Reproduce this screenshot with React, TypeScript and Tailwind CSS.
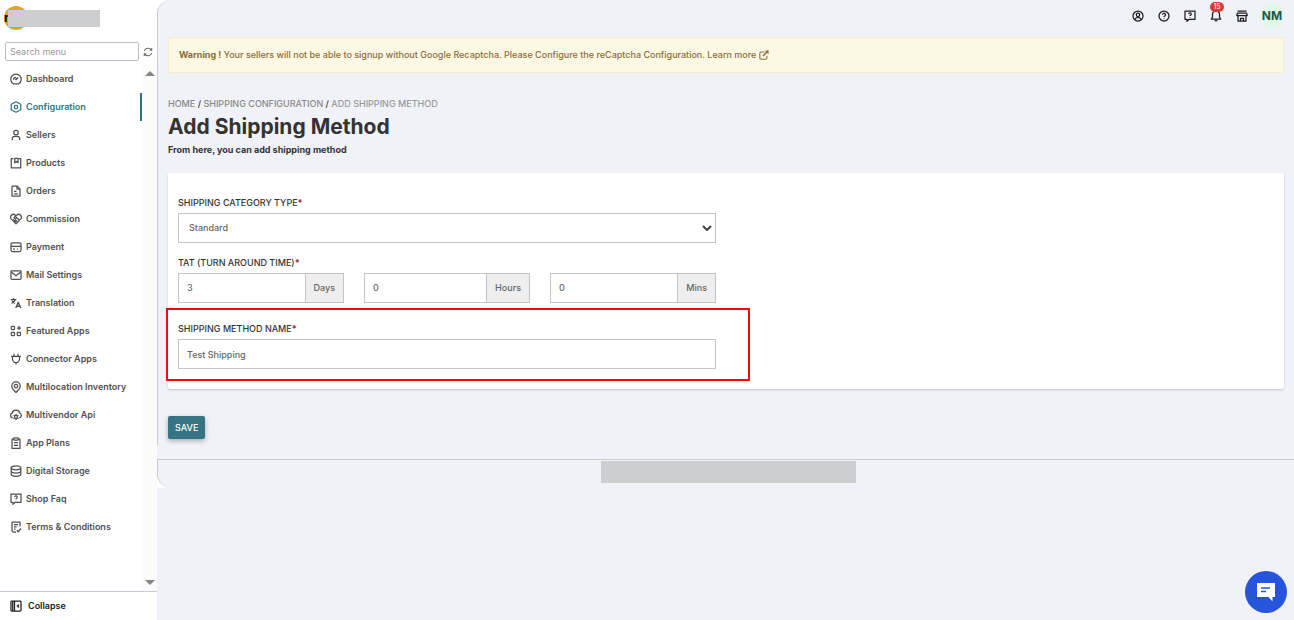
import React from 'react';

const ICONS = {
  dashboard: (
    <>
      <path d="M6.500 21.500a10.500 10.500 0 1 1 11 0Z" />
      <path d="m11 14 5-5" strokeWidth="3.500" />
      <path d="M7 13.500a5 5 0 0 1 5-5" />
    </>
  ),
  configuration: (
    <>
      <path d="M12 1.500 21.500 6.500v11L12 22.500 2.500 17.500v-11Z" />
      <circle cx="12" cy="12" r="3.500" />
    </>
  ),
  sellers: (
    <>
      <circle cx="12" cy="7" r="4.500" />
      <path d="M4.500 22v-2.500a5 5 0 0 1 5-5h5a5 5 0 0 1 5 5V22" />
    </>
  ),
  products: (
    <>
      <path d="M7 3H2.500v18.500h19V3H17" />
      <path d="M9.500 2.500h6.500v9l-3.200-2.500-3.300 2.500Z" />
    </>
  ),
  orders: (
    <>
      <path d="M14 2H4v20h16V8Z" />
      <path d="M14 2v6h6M8 12.500h5M8 17.500h8" />
    </>
  ),
  commission: (
    <>
      <path d="M12 21.500 2.800 12.300a5.800 5.800 0 0 1 0-7.800 5.700 5.700 0 0 1 8 0L12 5.500l1.200-1a5.700 5.700 0 0 1 8 0 5.800 5.800 0 0 1 0 7.800Z" />
      <path d="m12 5.500-4 4c1.500 2 3.500 1.500 5-.5l5.500 5M10 13l5 4.500M6.500 13l5 5" />
    </>
  ),
  payment: (
    <>
      <rect x="2" y="3.500" width="20" height="17.500" rx="3" />
      <path d="M2 10.500h20M6 16h4M14 16h2" />
    </>
  ),
  mail: (
    <>
      <rect x="2" y="3.500" width="20" height="17" rx="1.500" />
      <path d="m2.500 6 9.500 7.500L21.500 6" />
    </>
  ),
  translation: (
    <>
      <path d="M1.500 5h11M7 2v3M3 13c4-1.500 6.500-4 7.500-8M4 7.500c1.500 3 3.500 4.500 6 5.500" />
      <path d="m11.500 22 5-11.500 5 11.500M13 18.500h7" strokeWidth="2.600" />
    </>
  ),
  featured: (
    <>
      <rect x="2.500" y="2.500" width="6.500" height="6.500" rx="1.500" />
      <rect x="2.500" y="14.500" width="6.500" height="6.500" rx="1.500" />
      <rect x="14.500" y="14.500" width="6.500" height="6.500" rx="1.500" />
      <path d="M18 2v8M14 6h8" />
    </>
  ),
  connector: (
    <>
      <path d="M2 6.500h20M5 6.500V12a7 7 0 0 0 14 0V6.500M8 1.500v5M16 1.500v5M12 19v4" />
    </>
  ),
  location: (
    <>
      <path d="M12 23c-5-4.500-8.500-8-8.500-12.800a8.500 8.500 0 0 1 17 0C20.500 15 17 18.500 12 23Z" />
      <circle cx="12" cy="10" r="3.500" />
    </>
  ),
  cloud: (
    <>
      <path d="M5.500 18A5 5 0 0 1 4 8.500a8.200 8.200 0 0 1 15.800 0 5 5 0 0 1-1.300 9.500" />
      <circle cx="12" cy="15.500" r="3" />
      <path d="M12 10v2.500M12 18.500V22M7 12.500l2.500 1.500M17 12.500 14.500 14M7 19.500l2.500-2M17 19.500l-2.500-2" />
    </>
  ),
  plans: (
    <>
      <path d="M8 4H4v18.500h16V4h-4" />
      <rect x="8" y="1.500" width="8" height="4.500" />
      <path d="M8 11h8M8 16.500h8" />
    </>
  ),
  storage: (
    <>
      <ellipse cx="12" cy="5.500" rx="9.500" ry="4" />
      <path d="M2.500 5.500v13c0 2.200 4 4 9.500 4s9.500-1.800 9.500-4v-13M2.500 12c0 2.200 4 4 9.500 4s9.500-1.800 9.500-4" />
    </>
  ),
  faq: (
    <>
      <path d="M2 2h20v16.500H10.500L6 22.500v-4H2Z" />
      <path d="M9.500 8.300a2.500 2.500 0 1 1 3.800 2c-.9.500-1.300 1-1.300 1.700M12 14.500v1" />
    </>
  ),
  terms: (
    <>
      <path d="M20 11V2H4v16.500a3.500 3.500 0 0 0 3.500 3.500H12M8 7h8M8 11.500h5M8 16h3" />
      <path d="m13.500 18.500 3 3L22 15" />
    </>
  ),
  collapse: (
    <>
      <rect x="2" y="2" width="20" height="20" rx="1.500" />
      <path d="M9 2v20M5.500 2v20" />
      <path d="m17.500 8.500-4 3.500 4 3.500Z" fill="currentColor" strokeWidth="1" />
    </>
  ),
  refresh: (
    <>
      <path d="M3 10a9.500 9.500 0 0 1 17-3M21 14a9.500 9.500 0 0 1-17 3" />
      <path d="M21 2.500V8h-5M3 21.500V16h5" />
    </>
  ),
  user: (
    <>
      <circle cx="12" cy="12" r="10" />
      <circle cx="12" cy="9.500" r="3.500" />
      <path d="M5.500 19c1.500-3 3.500-4.500 6.500-4.500s5 1.500 6.500 4.500" />
    </>
  ),
  help: (
    <>
      <circle cx="12" cy="12" r="10" />
      <path d="M9 9.500a3 3 0 1 1 4.600 2.500c-1.100.7-1.600 1.200-1.600 2.200M12 16.500v1.500" />
    </>
  ),
  bell: (
    <>
      <path d="M2.500 18h19L19 14.500V9A7 7 0 0 0 5 9v5.500Z" />
      <path d="M9 21.500h6" />
    </>
  ),
  store: (
    <>
      <path d="M3 2h18M3 6h18l1.500 5h-21ZM4 11v11h16V11M9 22v-5.500h6V22" />
    </>
  ),
  external: (
    <>
      <path d="M13 5H5a3 3 0 0 0-3 3v11a3 3 0 0 0 3 3h11a3 3 0 0 0 3-3v-5" />
      <path d="m9.500 14.500 10-10" strokeWidth="3.500" />
      <path d="M15 1.500h7.500V9Z" fill="currentColor" strokeWidth="1" />
    </>
  ),
};

type IconName = keyof typeof ICONS;

interface IconProps {
  name: IconName;
  className?: string;
}

function Icon({ name, className = 'size-3' }: IconProps) {
  return (
    <svg
      viewBox="0 0 24 24"
      fill="none"
      stroke="currentColor"
      strokeWidth="2.500"
      strokeLinejoin="round"
      className={`shrink-0 ${className}`}
      aria-hidden="true"
    >
      {ICONS[name]}
    </svg>
  );
}

const menu: { label: string; icon: IconName }[] = [
  { label: 'Dashboard', icon: 'dashboard' },
  { label: 'Configuration', icon: 'configuration' },
  { label: 'Sellers', icon: 'sellers' },
  { label: 'Products', icon: 'products' },
  { label: 'Orders', icon: 'orders' },
  { label: 'Commission', icon: 'commission' },
  { label: 'Payment', icon: 'payment' },
  { label: 'Mail Settings', icon: 'mail' },
  { label: 'Translation', icon: 'translation' },
  { label: 'Featured Apps', icon: 'featured' },
  { label: 'Connector Apps', icon: 'connector' },
  { label: 'Multilocation Inventory', icon: 'location' },
  { label: 'Multivendor Api', icon: 'cloud' },
  { label: 'App Plans', icon: 'plans' },
  { label: 'Digital Storage', icon: 'storage' },
  { label: 'Shop Faq', icon: 'faq' },
  { label: 'Terms & Conditions', icon: 'terms' },
];

const topLinks: { label: string; icon: IconName; count?: number }[] = [
  { label: 'Account', icon: 'user' },
  { label: 'Help', icon: 'help' },
  { label: 'Faq', icon: 'faq' },
  { label: 'Notifications', icon: 'bell', count: 15 },
  { label: 'Store', icon: 'store' },
];

function Sidebar() {
  const [active, setActive] = React.useState('Configuration');

  return (
    <aside className="flex w-[157px] shrink-0 flex-col bg-white">
      <div className="flex h-9 items-center px-1">
        <div className="relative size-6 rounded-full bg-[#eda20c]">
          <span className="absolute top-1 left-0 text-xs leading-4 font-bold text-black">n</span>
          <div className="absolute top-1 left-1 h-[17px] w-[92px] bg-[#cdced0]" />
        </div>
      </div>

      <div className="flex items-center gap-1 pt-1.5 pl-[5px]">
        <input
          type="search"
          aria-label="Search menu"
          placeholder="Search menu"
          className="h-[19px] w-[134px] rounded-xs border border-[#b9bdc9] px-1 text-[9px] outline-none placeholder:text-[#999]"
        />
        <button type="button" aria-label="Refresh menu" className="text-[#666]">
          <Icon name="refresh" className="size-2.5" />
        </button>
      </div>

      <div className="mt-1 flex min-h-0 flex-1">
        <nav className="flex-1">
          {menu.map((item) => (
            <a
              key={item.label}
              href="#"
              onClick={() => setActive(item.label)}
              className={`flex h-7 items-center gap-1 border-r-2 pl-2.5 text-[9px] font-semibold whitespace-nowrap ${
                active === item.label ? 'border-[#2f6b78] text-[#2f7480]' : 'border-transparent text-[#505050]'
              }`}
            >
              <Icon name={item.icon} />
              {item.label}
            </a>
          ))}
        </nav>
        <div className="flex w-[15px] flex-col items-center justify-between bg-[#fbfbfb] py-1.5">
          <svg viewBox="0 0 10 5" className="h-[5px] w-2.5 fill-[#858585]">
            <path d="M0 5 5 0l5 5Z" />
          </svg>
          <svg viewBox="0 0 10 5" className="h-[5px] w-2.5 fill-[#858585]">
            <path d="M0 0h10L5 5Z" />
          </svg>
        </div>
      </div>

      <button
        type="button"
        className="flex h-[29px] items-center gap-1.5 border-t border-[#c5cbd8] pl-2.5 text-[9px] font-semibold text-[#222]"
      >
        <Icon name="collapse" />
        Collapse
      </button>
    </aside>
  );
}

function TopBar() {
  return (
    <header className="flex h-8 items-center justify-end gap-3.5">
      {topLinks.map((link) => (
        <a key={link.label} href="#" aria-label={link.label} className="relative text-[#1d1d1d]">
          <Icon name={link.icon} />
          {link.count && (
            <span className="absolute -top-2 left-0 flex h-2.5 w-3.5 items-center justify-center rounded-full bg-[#d63d39] text-[7px] text-white">
              {link.count}
            </span>
          )}
        </a>
      ))}
      <button
        type="button"
        className="-ml-0.5 flex size-6 items-center justify-center rounded-full bg-[#e2f9e9] text-xs font-bold text-[#28573c]"
      >
        NM
      </button>
    </header>
  );
}

interface LabelProps {
  htmlFor: string;
  children: React.ReactNode;
}

function Label({ htmlFor, children }: LabelProps) {
  return (
    <label htmlFor={htmlFor} className="block pb-0.5 text-[9px] leading-4 font-medium text-[#333] uppercase">
      {children}
      <span className="font-bold text-[#a12a3a]">*</span>
    </label>
  );
}

interface TimeInputProps {
  id: string;
  unit: string;
  initial: string;
}

function TimeInput({ id, unit, initial }: TimeInputProps) {
  const [value, setValue] = React.useState(initial);

  return (
    <div className="flex h-[30px] min-w-0 border border-[#c2c4c6]">
      <input
        id={id}
        aria-label={unit}
        value={value}
        onChange={(e) => setValue(e.target.value)}
        className="min-w-0 flex-1 px-2 text-[9px] font-medium text-[#666] outline-none"
      />
      <span className="flex items-center border-l border-[#c2c4c6] bg-[#eee] px-2 text-[9px] font-medium text-[#666]">
        {unit}
      </span>
    </div>
  );
}

function ShippingForm() {
  const [name, setName] = React.useState('Test Shipping');

  return (
    <form>
      <div className="rounded-xs bg-white px-2.5 pt-[22px] pb-5 shadow-[0_1px_2px_rgba(60,60,90,0.25)]">
        <div className="w-1/2 pr-2.5">
          <Label htmlFor="category">Shipping Category Type</Label>
          <div className="relative">
            <select
              id="category"
              className="h-[30px] w-full appearance-none border border-[#c2c4c6] bg-white px-2.5 text-[9px] font-medium text-[#666] outline-none"
            >
              <option>Standard</option>
              <option>Express</option>
            </select>
            <svg
              viewBox="0 0 10 6"
              fill="none"
              stroke="#444"
              strokeWidth="2"
              className="pointer-events-none absolute top-3 right-1 h-1.5 w-2.5"
            >
              <path d="m1 1 4 4 4-4" />
            </svg>
          </div>

          <div className="pt-3">
            <Label htmlFor="days">Tat (Turn Around Time)</Label>
            <div className="grid grid-cols-3 gap-5">
              <TimeInput id="days" unit="Days" initial="3" />
              <TimeInput id="hours" unit="Hours" initial="0" />
              <TimeInput id="mins" unit="Mins" initial="0" />
            </div>
          </div>

          <div className="relative pt-[18px]">
            <Label htmlFor="name">Shipping Method Name</Label>
            <input
              id="name"
              value={name}
              onChange={(e) => setName(e.target.value)}
              className="h-[30px] w-full border border-[#c2c4c6] px-2 text-[9px] font-medium text-[#666] outline-none"
            />
            <div className="pointer-events-none absolute top-[5px] -right-[34px] -bottom-3 -left-3 border-2 border-[#fb0505]" />
          </div>
        </div>
      </div>

      <button
        type="button"
        className="mt-[27px] h-[23px] rounded-xs bg-[#357482] px-[7px] text-[9px] font-medium text-white shadow-[0_2px_5px_rgba(0,0,0,0.3)]"
      >
        SAVE
      </button>
    </form>
  );
}

export default function App() {
  return (
    <div className="flex min-h-screen bg-[#f0f2f8] font-['Inter',sans-serif]">
      <Sidebar />

      <div className="min-w-0 flex-1">
        <div className="bg-white">
          <main className="rounded-tl-[14px] border-l border-[#c5cbd8] bg-[#f0f2f8] px-2.5 pb-1.5">
            <TopBar />

            <div className="mt-[5px] flex h-9 items-center rounded-xs border border-[#f7ebcd] bg-[#fcf8e3] px-2.5 text-[9px] font-medium text-[#8a6d3b]">
              <p>
                <strong>Warning !</strong> Your sellers will not be able to signup without Google Recaptcha. Please
                Configure the reCaptcha Configuration.{' '}
                <a href="#">
                  Learn more <Icon name="external" className="inline size-2.5 align-text-bottom" />
                </a>
              </p>
            </div>

            <nav aria-label="Breadcrumb" className="pt-[23px] text-[9px] leading-4 font-medium text-[#333]">
              <a href="#" className="text-[#888]">HOME</a> /{' '}
              <a href="#" className="text-[#888]">SHIPPING CONFIGURATION</a> /{' '}
              <span className="text-[#999]">ADD SHIPPING METHOD</span>
            </nav>
            <h1 className="text-[21px] leading-[30px] font-bold text-[#333]">Add Shipping Method</h1>
            <p className="pb-[15px] text-[9px] leading-4 font-bold text-[#333]">
              From here, you can add shipping method
            </p>

            <ShippingForm />
          </main>
        </div>

        <div className="h-3.5" />
        <div className="bg-white">
          <footer className="flex h-[29px] justify-center rounded-bl-[14px] border-t border-l border-[#c5cbd8] bg-[#f0f2f8] pt-px pl-1">
            <div className="h-[22px] w-[255px] bg-[#cdced0]" />
          </footer>
        </div>
      </div>

      <button
        type="button"
        aria-label="Open chat"
        className="fixed right-[7px] bottom-[7px] flex size-[42px] items-center justify-center rounded-full bg-[#2754dd]"
      >
        <svg viewBox="0 0 20 19" className="h-[19px] w-5">
          <path d="M1 0h18v14h-2.500v4.500L12.500 14H1Z" fill="#fff" />
          <path d="M5 5h9M5 8.500h5" stroke="#2754dd" strokeWidth="1.600" />
        </svg>
      </button>
    </div>
  );
}
